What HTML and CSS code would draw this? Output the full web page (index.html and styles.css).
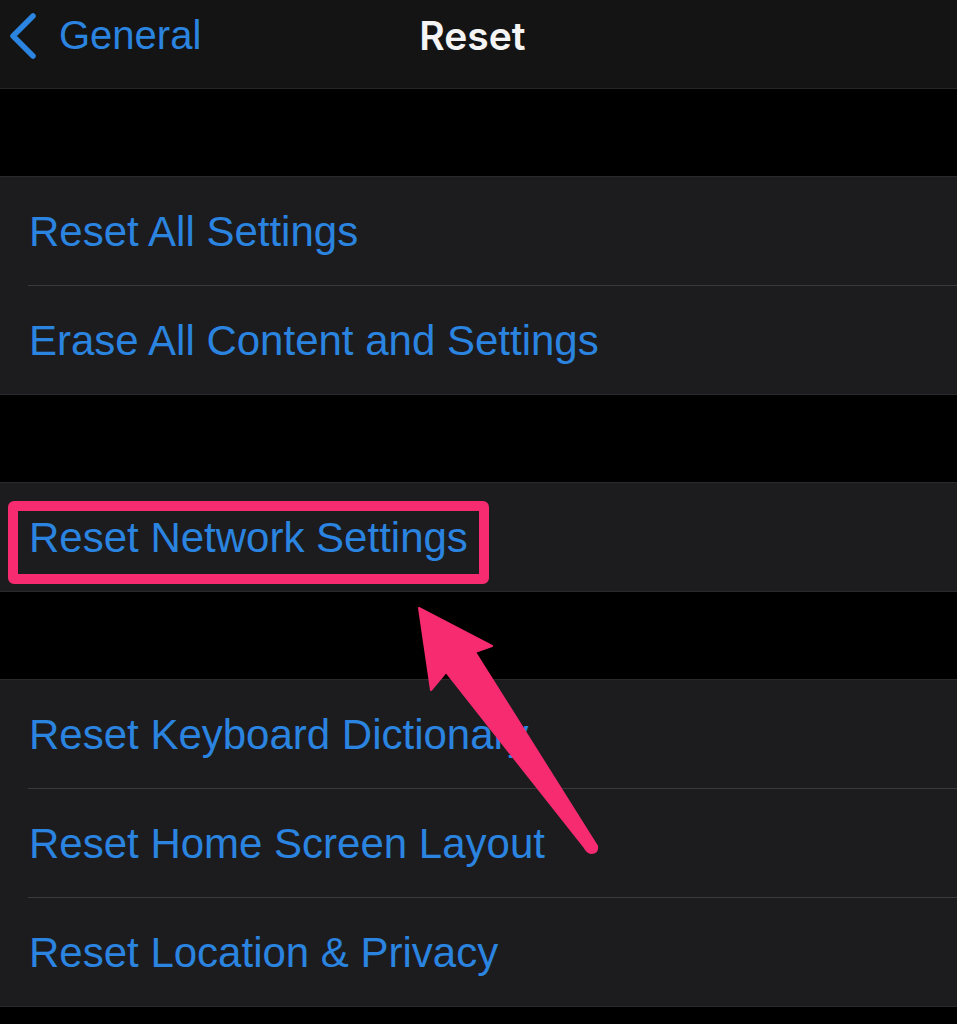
FILE: index.html
```html
<!DOCTYPE html>
<html>
<head>
<meta charset="utf-8">
<link rel="stylesheet" href="styles.css">
</head>
<body>
<div class="screen">
  <header class="nav">
    <div class="back">
      <svg class="chev" width="30" height="48" viewBox="0 0 30 48">
        <path d="M25 4 L5 24 L25 44" fill="none" stroke="#2a84e0" stroke-width="5.5" stroke-linecap="round" stroke-linejoin="round"/>
      </svg>
      <span class="back-label">General</span>
    </div>
    <div class="title">Reset</div>
  </header>
  <div class="gap"></div>
  <section class="group">
    <div class="row"><span>Reset All Settings</span></div>
    <div class="row"><span>Erase All Content and Settings</span></div>
  </section>
  <div class="gap"></div>
  <section class="group">
    <div class="row"><span>Reset Network Settings</span></div>
  </section>
  <div class="gap"></div>
  <section class="group">
    <div class="row"><span>Reset Keyboard Dictionary</span></div>
    <div class="row"><span>Reset Home Screen Layout</span></div>
    <div class="row"><span>Reset Location &amp; Privacy</span></div>
  </section>
  <div class="highlight"></div>
  <svg class="arrow" width="957" height="1024" viewBox="0 0 957 1024">
    <path d="M419 608 L492 646 L475 652 L597 846 Q598 853 591 853 Q587 852 585 848 L446 672 L431 690 Z" fill="#f72b70" stroke="#f72b70" stroke-width="2" stroke-linejoin="round"/>
  </svg>
</div>
</body>
</html>
```
FILE: styles.css
```css
html, body {
  margin: 0;
  padding: 0;
  background: #000;
}
.screen {
  position: relative;
  width: 957px;
  height: 1024px;
  overflow: hidden;
  background: #000;
  font-family: "Liberation Sans", Arial, sans-serif;
}
.nav {
  height: 88px;
  background: #141414;
  border-bottom: 1px solid #262628;
  position: relative;
  display: flex;
  align-items: center;
}
.back {
  display: flex;
  align-items: center;
  padding-left: 8px;
  gap: 21px;
  margin-top: -17px;
}
.chev {
  display: block;
}
.back-label {
  color: #2a84e0;
  font-size: 40px;
}
.title {
  position: absolute;
  left: 0;
  right: 0;
  top: 12px;
  text-align: center;
  color: #f4f4f4;
  font-family: Inter, "Liberation Sans", sans-serif;
  font-size: 39px;
  font-weight: 600;
  padding-right: 12px;
}
.gap {
  height: 87px;
}
.group {
  background: #1c1c1e;
  border-top: 1px solid #2a2a2c;
  border-bottom: 1px solid #2a2a2c;
}
.row {
  height: 108px;
  margin-left: 28px;
  display: flex;
  align-items: center;
  color: #2a84e0;
  font-size: 42px;
}
.row + .row {
  border-top: 1px solid #3a3a3c;
}
.row span {
  margin-left: 1px;
  margin-top: 2px;
}
.highlight {
  position: absolute;
  left: 8px;
  top: 501px;
  width: 461px;
  height: 63px;
  border: 10px solid #f72b70;
  border-radius: 6px;
}
.arrow {
  position: absolute;
  left: 0;
  top: 0;
}
```
